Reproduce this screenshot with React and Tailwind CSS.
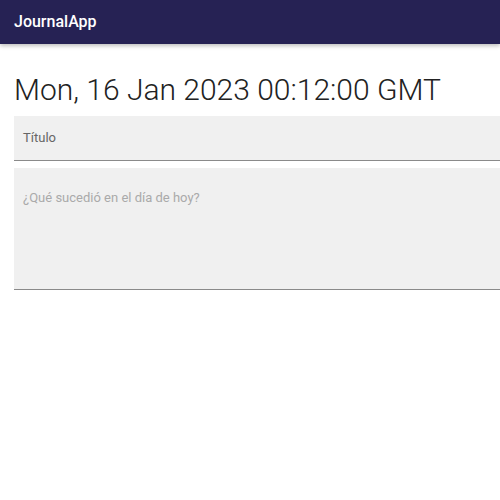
export default function App() {
  return (
    <div className="min-h-[500px] bg-white" style={{ fontFamily: "Roboto, 'Liberation Sans', sans-serif" }}>
      <header className="h-[44px] bg-[#262254] flex items-center px-[14px] shadow-[0_2px_4px_rgba(0,0,0,0.25)]">
        <span className="text-[#fff] text-[16px] font-medium">JournalApp</span>
      </header>
      <main className="pl-[14px] pt-[27px]">
        <h1 className="text-[30px] font-light text-[#222] leading-[37px] whitespace-nowrap">Mon, 16 Jan 2023 00:12:00 GMT</h1>
        <div className="mt-[8px] h-[45px] bg-[#f0f0f0] border-b border-[#8a8a8a] flex items-center px-[9px]">
          <span className="text-[13px] text-[#666]">Título</span>
        </div>
        <div className="mt-[7px] h-[122px] bg-[#f0f0f0] border-b border-[#8a8a8a] px-[9px] pt-[21px]">
          <span className="block text-[13px] leading-[18px] text-[#aaa]">¿Qué sucedió en el día de hoy?</span>
        </div>
      </main>
    </div>
  );
}
